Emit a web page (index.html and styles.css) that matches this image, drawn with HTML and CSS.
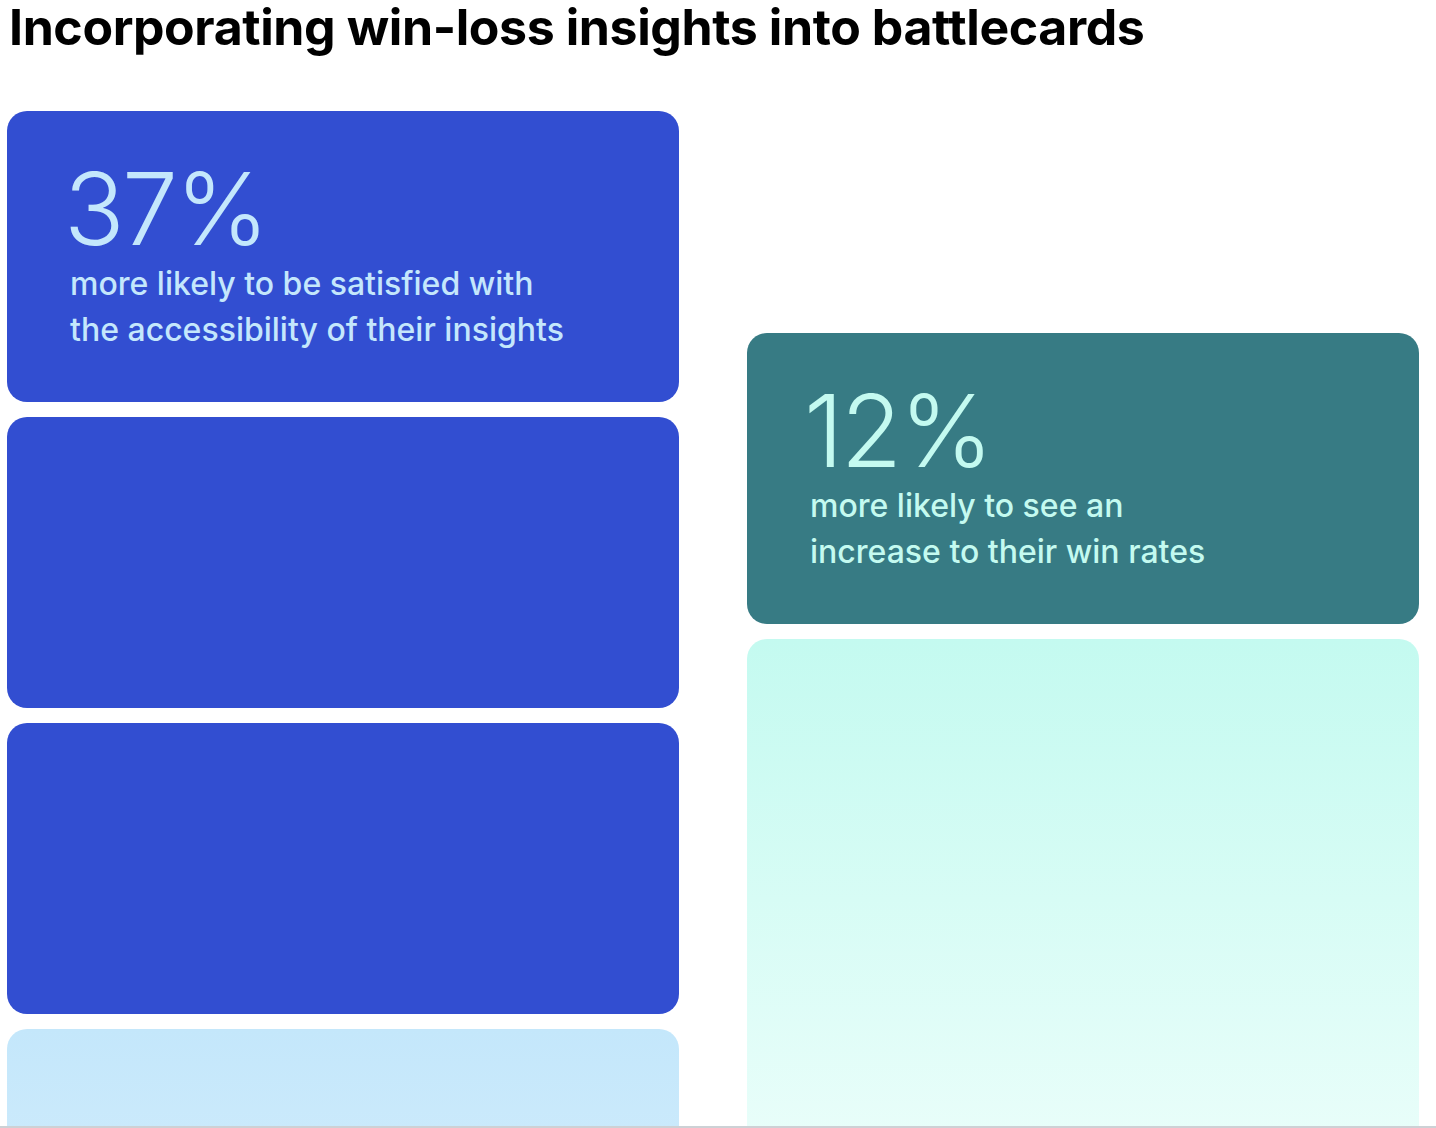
FILE: index.html
```html
<!DOCTYPE html>
<html lang="en">
<head>
<meta charset="utf-8">
<title>Incorporating win-loss insights into battlecards</title>
<link rel="stylesheet" href="styles.css">
</head>
<body>
<div class="page">
  <h1 class="title">Incorporating win-loss insights into battlecards</h1>
  <div class="grid">
    <div class="col">
      <div class="card card-blue">
        <div class="stat">37%</div>
        <p class="desc">more likely to be satisfied with<br>the accessibility of their insights</p>
      </div>
      <div class="card card-blue"></div>
      <div class="card card-blue"></div>
      <div class="card card-sky"></div>
    </div>
    <div class="col col-right">
      <div class="card card-teal">
        <div class="stat">12%</div>
        <p class="desc">more likely to see an<br>increase to their win rates</p>
      </div>
      <div class="card card-mint"></div>
    </div>
  </div>
</div>
</body>
</html>
```
FILE: styles.css
```css
html, body {
  margin: 0;
  padding: 0;
  background: #ffffff;
  overflow: hidden;
}

.page {
  height: 1126px;
  overflow: hidden;
  border-bottom: 2px solid #cdd1d5;
  font-family: "Inter", "Noto Sans", sans-serif;
}

.title {
  margin: 0 0 0 9px;
  font-size: 50px;
  line-height: 54px;
  font-weight: 700;
  letter-spacing: -0.4px;
  color: #000000;
}

.grid {
  display: grid;
  grid-template-columns: 672px 672px;
  column-gap: 68px;
  padding-left: 7px;
  margin-top: 57px;
}

.col {
  display: flex;
  flex-direction: column;
  gap: 15px;
}

.col-right {
  padding-top: 222px;
}

.card {
  height: 291px;
  border-radius: 20px;
  box-sizing: border-box;
  padding: 50px 60px 0 60px;
  flex-shrink: 0;
}

.card-blue {
  background: #324ed1;
  color: #c4e7fc;
}

.card-teal {
  background: #377b84;
  color: #c4faf0;
}

.card-sky {
  height: 520px;
  background: linear-gradient(180deg, #c4e7fb 0%, #e4f4fd 100%);
}

.card-mint {
  height: 520px;
  background: linear-gradient(180deg, #c4faf0 0%, #eafefa 100%);
}

.stat {
  margin-left: -3px;
  font-size: 100px;
  line-height: 96px;
  font-weight: 300;
  letter-spacing: -0.025em;
}

.desc {
  margin: 4px 0 0 3px;
  font-size: 32px;
  line-height: 46px;
  font-weight: 500;
}
```
